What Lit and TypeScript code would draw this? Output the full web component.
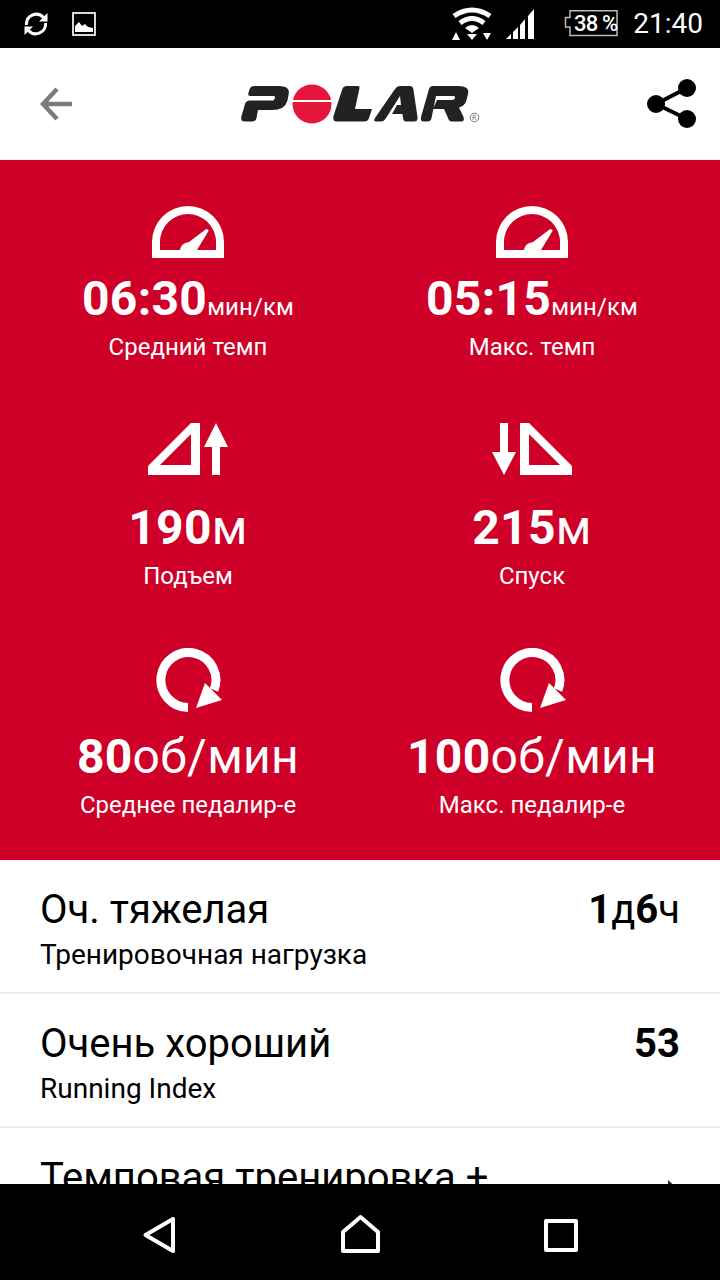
import { LitElement, html, css, svg } from "lit";
import { customElement } from "lit/decorators.js";

const gaugeIcon = svg`<path fill="#fff" fill-rule="evenodd" d="M12 68V52a36 36 0 0 1 72 0v16ZM20 60h56v-8a28 28 0 0 0-56 0Z"/><path fill="#fff" d="M40 60Q41 53 49 52L65.500 39.500Q67.500 38.500 68.800 40.500L57 60Z"/>`;

const icons: Record<string, unknown> = {
  g1: gaugeIcon,
  g2: gaugeIcon,
  up: svg`<path fill="#fff" fill-rule="evenodd" d="M8 56V47L51 4h9v52ZM20 46h31V15Z"/><path fill="#fff" d="M72 56V28H64L76 4l12 24H80v28Z"/>`,
  down: svg`<path fill="#fff" fill-rule="evenodd" d="M88 56V47L45 4H36V56ZM76 46H45V15Z"/><path fill="#fff" d="M16 4h8v29h8L20 56 8 33h8Z"/>`,
  rot: svg`<path fill="none" stroke="#fff" stroke-width="9" d="M48 59.500A27.500 27.500 0 1 1 74 42"/><path fill="#fff" d="M56 60 65 35 82 52Z"/>`,
};

const metrics = [
  { i: "g1", v: "06:30", u: "мин/км", small: true, l: "Средний темп" },
  { i: "g2", v: "05:15", u: "мин/км", small: true, l: "Макс. темп" },
  { i: "up", v: "190", u: "м", small: false, l: "Подъем" },
  { i: "down", v: "215", u: "м", small: false, l: "Спуск" },
  { i: "rot", v: "80", u: "об/мин", small: false, l: "Среднее педалир-е" },
  { i: "rot", v: "100", u: "об/мин", small: false, l: "Макс. педалир-е" },
];

@customElement("app-root")
export class AppRoot extends LitElement {
  static styles = css`
    :host { display: flex; flex-direction: column; width: 720px; height: 1280px; overflow: hidden; background: #fff; font-family: Roboto, sans-serif; color: #000; }
    .status { height: 48px; flex: none; background: #000; color: #fff; display: flex; align-items: center; padding: 0 17px 0 24px; }
    .status svg { display: block; flex: none; }
    .img { margin-left: 24px; }
    .spacer { flex: 1; }
    .wifi { margin-right: -1px; }
    .sig { margin-left: 15px; }
    .batt { margin-left: 28px; position: relative; width: 54px; height: 28px; }
    .batt span { position: absolute; left: 9px; right: 0; top: 0; text-align: center; font-size: 22px; line-height: 27px; font-weight: 500; letter-spacing: -0.8px; white-space: nowrap; }
    .time { margin-left: 15px; font-size: 28px; line-height: 48px; }
    .header { height: 112px; flex: none; display: flex; align-items: center; justify-content: space-between; padding: 0 24px 0 40px; border-bottom: 1px solid #f3f3f3; box-sizing: border-box; position: relative; }
    .logo { position: absolute; left: 240px; top: 36px; }
    .red { flex: none; height: 700px; box-sizing: border-box; background: #cf0027; color: #fff; display: grid; grid-template-columns: 344px 344px; justify-content: center; row-gap: 57px; padding: 30px 0 40px; }
    .cell { display: flex; flex-direction: column; align-items: center; height: 172px; }
    .cell svg { display: block; width: 96px; height: 72px; flex: none; }
    .val { margin-top: 9px; font-size: 48px; line-height: 56px; font-weight: 700; white-space: nowrap; letter-spacing: 0.3px; }
    .val span { font-weight: 400; }
    .val span.small { font-size: 24px; line-height: 1; letter-spacing: 0.1px; }
    .lbl { margin-top: 5px; font-size: 24px; line-height: 30px; white-space: nowrap; }
    .list { flex: 1; min-height: 0; overflow: hidden; }
    .row { height: 134px; box-sizing: border-box; border-bottom: 2px solid #eeeeee; padding: 28px 40px 0; display: flex; justify-content: space-between; position: relative; }
    .t { font-size: 40px; line-height: 44px; white-space: nowrap; }
    .s { font-size: 28px; line-height: 34px; margin-top: 6px; white-space: nowrap; }
    .r { font-size: 40px; line-height: 44px; font-weight: 700; }
    .r span { font-weight: 400; }
    .caret { position: absolute; left: 668px; top: 52px; width: 0; height: 0; border-left: 11px solid #222; border-top: 10px solid transparent; border-bottom: 10px solid transparent; }
    .nav { height: 96px; flex: none; background: #000; }
    .nav svg { display: block; }
  `;

  render() {
    return html`
      <div class="status">
        <svg width="24" height="24" viewBox="0 0 24 24" fill="none" stroke="#fff" stroke-width="3">
          <path d="M2.500 13A9.800 9.800 0 0 1 19.500 5.500"/><path d="M21.500 11A9.800 9.800 0 0 1 4.500 18.500"/>
          <path fill="#fff" stroke="none" d="M23.500 1V9.500H15ZM.500 23V14.500H9Z"/>
        </svg>
        <svg class="img" width="24" height="24" viewBox="0 0 24 24">
          <path fill="#fff" fill-rule="evenodd" d="M0 0H24V24H0ZM2 2V22H22V2Z" opacity=".85"/>
          <path fill="#fff" d="M3 20V14L7 10 10 14 13 12 16 15 21 16V20Z"/>
        </svg>
        <div class="spacer"></div>
        <svg class="wifi" width="40" height="34" viewBox="0 0 40 34">
          <path fill="none" stroke="#fff" stroke-width="5" d="M2 9Q20-3 38 9M8 16Q20 7 32 16"/>
          <path fill="#fff" d="M13 21Q20 15 27 21L20 26ZM15 27H25L20 33ZM0 33 4 25 8 33ZM31 26H39L35 33Z"/>
        </svg>
        <svg class="sig" width="30" height="32" viewBox="0 0 30 32">
          <path fill="#fff" d="M0 31 5 26V31ZM7 31V24L12 19V31ZM14 31V17L19 11V31ZM22 31V8L28 1V31Z"/>
        </svg>
        <div class="batt">
          <svg width="54" height="28" viewBox="0 0 54 28" style="position:absolute;left:0;top:0"><path fill="none" stroke="#bbb" stroke-width="1.500" d="M6 .8H53V25.500H6V17H1.500V7.500H6Z"/></svg>
          <span>38 %</span>
        </div>
        <div class="time">21:40</div>
      </div>

      <div class="header">
        <svg width="34" height="34" viewBox="0 0 34 34" fill="none" stroke="#7b7b7b" stroke-width="4.500">
          <path d="M32 17H3M17 2 3 17 17 32"/>
        </svg>
        <svg class="logo" width="242" height="44" viewBox="240 84 242 44">
          <path fill="#222" d="M254 86H279Q291 86 288.500 95L287.500 100.500Q285 110 272 110H258L256.500 118Q256 121.500 252 121.500H245Q240 121.500 241.500 116L245 104Q246 100.500 250 100.500H272.500Q274 100.500 274.500 99L275 97.500Q275.300 96 273.500 96H250Q247.500 96 248.500 92.500L249.500 89.500Q250.500 86 254 86Z"/>
          <circle cx="312" cy="104" r="19.500" fill="#e4173a"/>
          <rect x="291" y="100" width="42" height="2" fill="#fff"/>
          <path fill="#222" d="M347 86H358Q360 86 359.500 88L355 109H372L369 118Q368 121.500 364 121.500H337Q332 121.500 333.500 116L342 90Q343 86 347 86Z"/>
          <path fill="#222" d="M400 86H410Q413 86 413.500 90L417.500 117Q418 121.500 414 121.500H406Q403.500 121.500 403 118L402.500 114H392L397 105H401L400 96 386 118Q384 121.500 381 121.500H376Q373 121.500 375 118L395 89Q397 86 400 86Z"/>
          <path fill="#222" d="M433 86H458Q470 86 468 94L466.500 100Q465 106 459 107.500L463.500 117Q465 121.500 461 121.500H452Q449 121.500 448 118L444 109H433L437 100H452Q454.500 100 455 98T453 96H436L431.500 118Q431 121.500 427 121.500H424Q420 121.500 421 117L429 89Q430 86 433 86Z"/>
          <circle cx="474.500" cy="117.500" r="4.300" fill="none" stroke="#777" stroke-width="1"/>
          <path fill="none" stroke="#777" stroke-width=".8" d="M473 120V115.200H475Q476.200 116 475 117.500H473M474.800 117.500 476.200 120"/>
        </svg>
        <svg width="50" height="50" viewBox="0 0 50 50">
          <g fill="#000"><circle cx="41" cy="9" r="9"/><circle cx="10" cy="25" r="9"/><circle cx="41" cy="40" r="9"/></g>
          <path fill="none" stroke="#000" stroke-width="4" d="M41 9 10 25 41 40"/>
        </svg>
      </div>

      <div class="red">
        ${metrics.map((m) => html`
          <div class="cell">
            <svg viewBox="0 0 96 72">${icons[m.i]}</svg>
            <div class="val">${m.v}<span class=${m.small ? "small" : ""}>${m.u}</span></div>
            <div class="lbl">${m.l}</div>
          </div>`)}
      </div>

      <div class="list">
        <div class="row">
          <div><div class="t">Оч. тяжелая</div><div class="s">Тренировочная нагрузка</div></div>
          <div class="r">1<span>д</span>6<span>ч</span></div>
        </div>
        <div class="row">
          <div><div class="t">Очень хороший</div><div class="s">Running Index</div></div>
          <div class="r">53</div>
        </div>
        <div class="row">
          <div class="t">Темповая тренировка +</div>
          <div class="caret"></div>
        </div>
      </div>

      <div class="nav">
        <svg width="720" height="96" viewBox="0 0 720 96" fill="none" stroke="#fff" stroke-width="4" stroke-linejoin="round">
          <path d="M173 35V67L145.500 51Z"/>
          <path d="M343 67V48L360.500 33 378 48V67Z"/>
          <rect x="546" y="37" width="30" height="29"/>
        </svg>
      </div>
    `;
  }
}
